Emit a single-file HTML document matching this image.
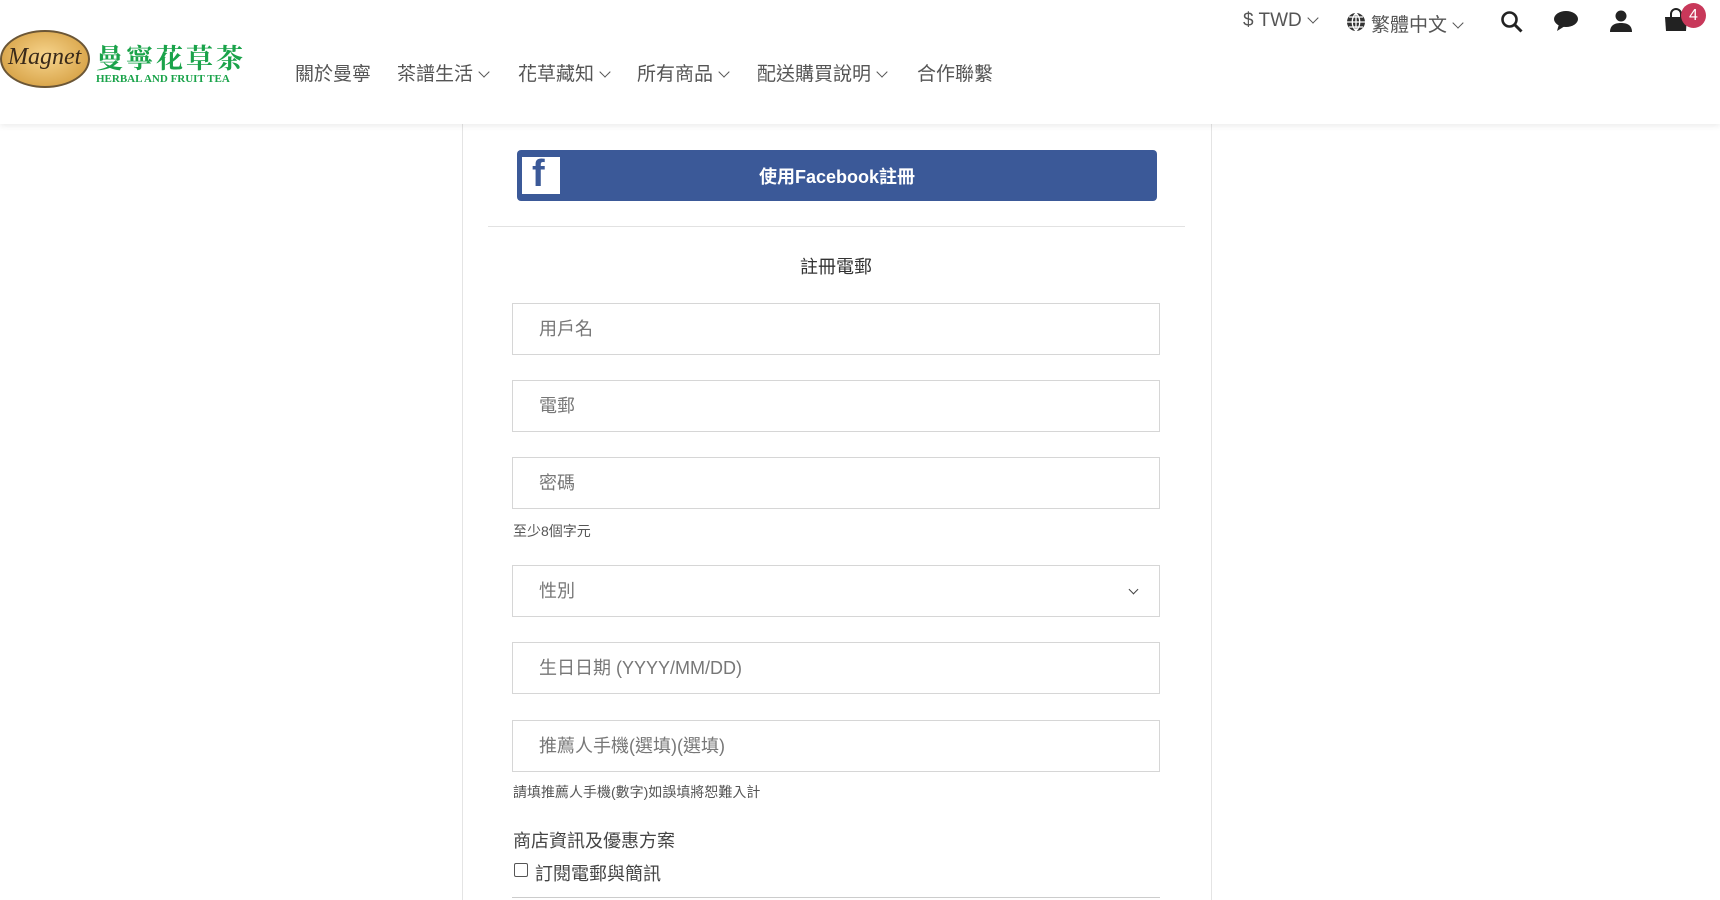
<!DOCTYPE html>
<html><head><meta charset="utf-8"><style>
*{box-sizing:border-box;margin:0;padding:0}
body{width:1720px;height:900px;overflow:hidden;background:#fff;font-family:"Liberation Sans","Noto Sans CJK TC",sans-serif;color:#333;position:relative}
.hdr{position:absolute;left:0;top:0;width:1720px;height:124px;background:#fff;box-shadow:0 2px 6px rgba(0,0,0,.08);z-index:2}
.abs{position:absolute;white-space:nowrap}
.nav{top:59px;font-size:19px;color:#555}
.chev{display:inline-block;width:8px;height:8px;border-right:1.5px solid #555;border-bottom:1.5px solid #555;transform:rotate(45deg);margin-left:7px;position:relative;top:-4px}
.panel{position:absolute;left:462px;top:124px;width:750px;height:776px;border-left:1px solid #e4e4e4;border-right:1px solid #e4e4e4}
.inp{position:absolute;left:512px;width:648px;height:52px;border:1px solid #d6d6d6;font-size:18px;color:#777;padding-left:26px;line-height:50px}
.hint{position:absolute;left:513px;font-size:14px;color:#555}
</style></head><body>
<div class="hdr">
  <div class="abs" style="left:0;top:30px;width:90px;height:58px;border-radius:50%;background:radial-gradient(ellipse at 50% 45%,#f7d58e,#d9a54a 75%,#8a6a3a);border:2px solid #6b5636"></div>
  <div class="abs" style="left:8px;top:44px;font-family:'Liberation Serif',serif;font-style:italic;font-size:24px;color:#3a2a1a">Magnet</div>
  <div class="abs" style="left:96px;top:37px;font-family:'Noto Serif CJK SC',serif;font-size:27px;font-weight:bold;color:#1aa34a;letter-spacing:3px">曼寧花草茶</div>
  <div class="abs" style="left:96px;top:73px;font-family:'Liberation Serif',serif;font-size:11px;font-weight:bold;color:#1aa34a">HERBAL AND FRUIT TEA</div>
  <div class="abs nav" style="left:295px">關於曼寧</div>
  <div class="abs nav" style="left:397px">茶譜生活<span class="chev"></span></div>
  <div class="abs nav" style="left:518px">花草藏知<span class="chev"></span></div>
  <div class="abs nav" style="left:637px">所有商品<span class="chev"></span></div>
  <div class="abs nav" style="left:757px">配送購買說明<span class="chev"></span></div>
  <div class="abs nav" style="left:917px">合作聯繫</div>
  <div class="abs" style="left:1243px;top:10px;font-size:19px;color:#555">$ TWD<span class="chev"></span></div>
  <svg class="abs" style="left:1346px;top:12px" width="20" height="20" viewBox="0 0 20 20"><circle cx="10" cy="10" r="9" fill="#333"/><path d="M1 10h18M10 1v18M10 1c-5 5-5 13 0 18M10 1c5 5 5 13 0 18M3 5h14M3 15h14" stroke="#fff" stroke-width="1.3" fill="none"/></svg>
  <div class="abs" style="left:1371px;top:10px;font-size:19px;color:#555">繁體中文<span class="chev"></span></div>
  <svg class="abs" style="left:1500px;top:10px" width="24" height="24" viewBox="0 0 24 24"><circle cx="9.5" cy="9.5" r="7" stroke="#222" stroke-width="2.6" fill="none"/><path d="M14.5 14.5l7 7" stroke="#222" stroke-width="3"/></svg>
  <svg class="abs" style="left:1553px;top:10px" width="26" height="22" viewBox="0 0 26 22"><ellipse cx="13" cy="9" rx="12" ry="8" fill="#222"/><path d="M6 14l-2 7 8-5z" fill="#222"/></svg>
  <svg class="abs" style="left:1609px;top:9px" width="24" height="24" viewBox="0 0 24 24"><circle cx="12" cy="7" r="5.5" fill="#222"/><path d="M1 23c0-7 5-9 11-9s11 2 11 9z" fill="#222"/></svg>
  <svg class="abs" style="left:1663px;top:8px" width="26" height="24" viewBox="0 0 26 24"><path d="M8 9V6a5 5 0 0 1 10 0v3" stroke="#222" stroke-width="2" fill="none"/><path d="M2 9h22l-1 14H3z" fill="#222"/></svg>
  <div class="abs" style="left:1681px;top:3px;width:25px;height:25px;border-radius:50%;background:#c8385a;color:#fff;font-size:16px;text-align:center;line-height:25px">4</div>
</div>
<div class="panel"></div>
<div class="abs" style="left:517px;top:150px;width:640px;height:51px;background:#3b5998;border-radius:4px"></div>
<div class="abs" style="left:522px;top:157px;width:38px;height:37px;background:#fff"></div>
<div class="abs" style="left:532px;top:153px;font-size:38px;font-weight:bold;color:#3b5998;font-family:'Liberation Sans',sans-serif">f</div>
<div class="abs" style="left:517px;top:163px;width:640px;text-align:center;color:#fff;font-size:18px;font-weight:bold">使用Facebook註冊</div>
<div class="abs" style="left:488px;top:226px;width:697px;height:1px;background:#e2e2e2"></div>
<div class="abs" style="left:512px;top:253px;width:648px;text-align:center;font-size:18px;color:#333">註冊電郵</div>
<div class="inp" style="top:303px">用戶名</div>
<div class="inp" style="top:380px">電郵</div>
<div class="inp" style="top:457px">密碼</div>
<div class="hint" style="top:521px">至少8個字元</div>
<div class="inp" style="top:565px">性別<span style="position:absolute;right:22px;top:20px;width:7px;height:7px;border-right:1.5px solid #444;border-bottom:1.5px solid #444;transform:rotate(45deg)"></span></div>
<div class="inp" style="top:642px">生日日期 (YYYY/MM/DD)</div>
<div class="inp" style="top:720px">推薦人手機(選填)(選填)</div>
<div class="hint" style="top:782px">請填推薦人手機(數字)如誤填將恕難入計</div>
<div class="abs" style="left:513px;top:827px;font-size:18px;color:#444">商店資訊及優惠方案</div>
<div class="abs" style="left:514px;top:863px;width:14px;height:14px;border:1.5px solid #555;border-radius:2px"></div>
<div class="abs" style="left:535px;top:860px;font-size:18px;color:#444">訂閱電郵與簡訊</div>
<div class="abs" style="left:512px;top:897px;width:648px;height:1px;background:#ccc"></div>
</body></html>
